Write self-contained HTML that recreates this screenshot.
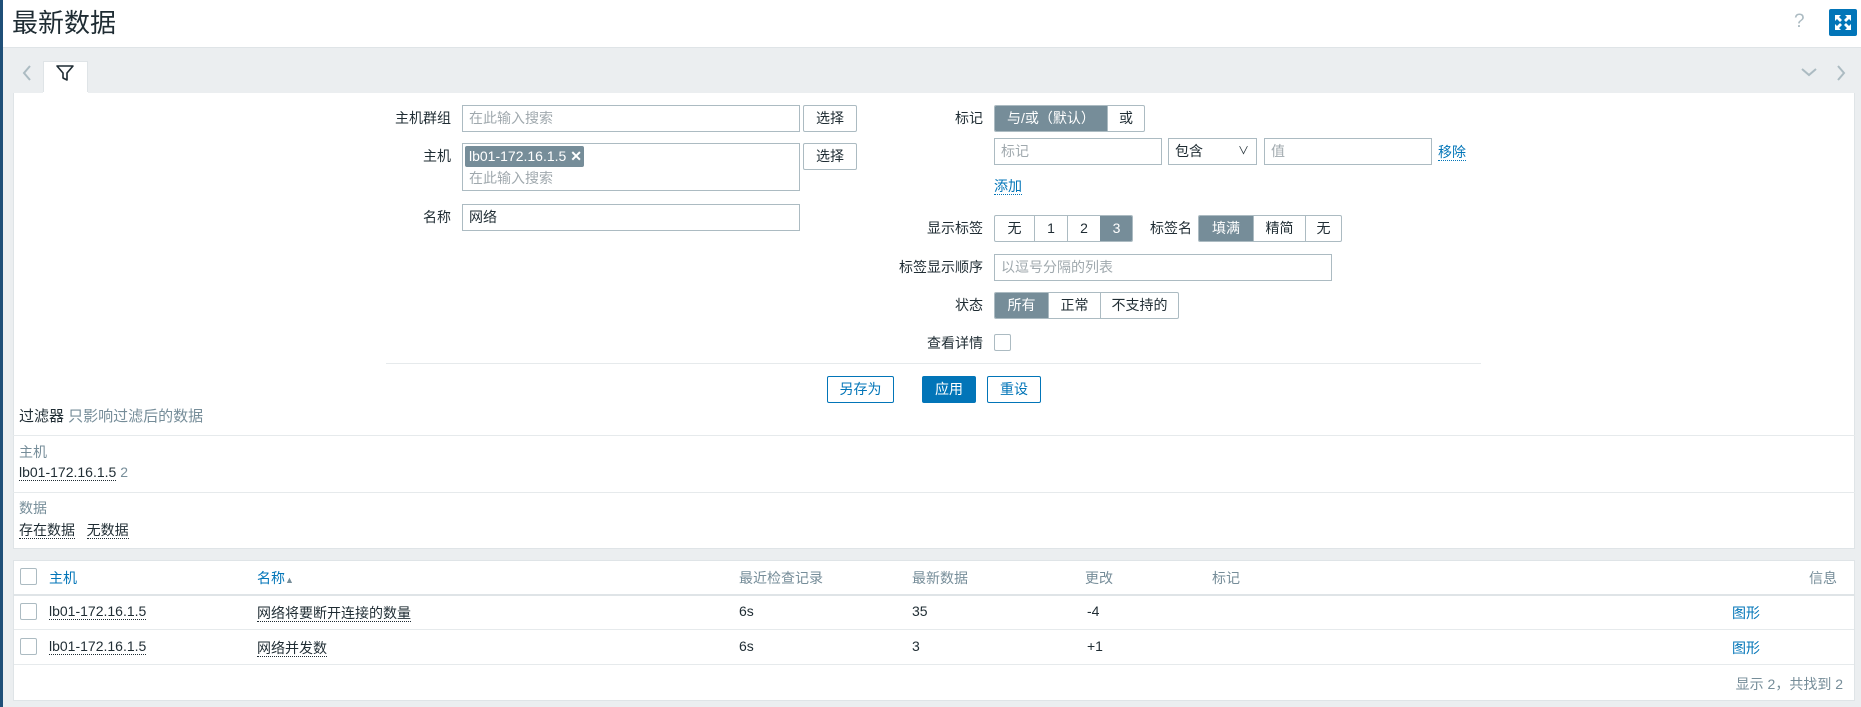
<!DOCTYPE html>
<html><head><meta charset="utf-8">
<style>
*{box-sizing:border-box;margin:0;padding:0}
body{width:1861px;height:707px;overflow:hidden;background:#ebeef0;font-family:"Liberation Sans","Noto Sans CJK SC",sans-serif;font-size:14px;color:#1f2c33;position:relative}
.a{position:absolute}
.lbl{position:absolute;text-align:right;line-height:27px}
.inp{position:absolute;border:1px solid #acbbc2;background:#fff;height:27px;line-height:25px;padding-left:6px}
.ph{color:#a0a9ae}
.btn{position:absolute;border:1px solid #acbbc2;background:#fff;height:27px;line-height:25px;text-align:center;border-radius:2px}
.seg{position:absolute;display:flex;height:27px;border:1px solid #acbbc2;border-radius:2px;overflow:hidden;background:#fff}
.seg div{line-height:25px;text-align:center;border-left:1px solid #acbbc2}
.seg div:first-child{border-left:none}
.seg .on{background:#768d99;color:#fff;border-color:#768d99}
.lnk{color:#0275b8;border-bottom:1px dotted #0275b8}
.dot{border-bottom:1px dotted #1f2c33}
.cb{position:absolute;width:17px;height:17px;border:1px solid #acbbc2;border-radius:2px;background:#fff}
.hline{position:absolute;height:1px;background:#e6eaec}
</style></head><body>
<div class="a" style="left:0;top:0;width:1861px;height:48px;background:#fff;border-bottom:1px solid #dfe4e7"></div>
<div class="a" style="left:0;top:0;width:3px;height:707px;background:#1f4f78"></div>
<div class="a" style="left:12px;top:8px;font-size:26px;line-height:30px">最新数据</div>
<div class="a" style="left:1794px;top:11px;font-size:19px;color:#acbbc2">?</div>
<div class="a" style="left:1829px;top:9px;width:28px;height:27px;background:#0275b8;border-radius:2px">
<svg width="28" height="27" viewBox="0 0 28 27"><g fill="#fff"><path d="M6 6h6l-2 2 3 3-2 2-3-3-2 2z"/><path d="M22 6h-6l2 2-3 3 2 2 3-3 2 2z"/><path d="M6 21h6l-2-2 3-3-2-2-3 3-2-2z"/><path d="M22 21h-6l2-2-3-3 2-2 3 3 2-2z"/></g></svg></div>
<!-- tab row -->
<svg class="a" style="left:20px;top:64px" width="14" height="18"><path d="M10 2 4 9l6 7" fill="none" stroke="#acbbc2" stroke-width="2"/></svg>
<div class="a" style="left:43px;top:61px;width:45px;height:33px;background:#fff;border:1px solid #dfe4e7;border-bottom:none"></div>
<svg class="a" style="left:55px;top:64px" width="20" height="18"><path d="M2 2h16l-6 7v7l-4-2V9z" fill="none" stroke="#1f2c33" stroke-width="1.6" stroke-linejoin="round"/></svg>
<svg class="a" style="left:1800px;top:64px" width="18" height="16"><path d="M2 5l7 6 7-6" fill="none" stroke="#acbbc2" stroke-width="2"/></svg>
<svg class="a" style="left:1834px;top:64px" width="14" height="18"><path d="M4 2l6 7-6 7" fill="none" stroke="#acbbc2" stroke-width="2"/></svg>
<!-- filter panel -->
<div class="a" style="left:13px;top:93px;width:1842px;height:456px;background:#fff;border:1px solid #dfe4e7;border-top:none"></div>
<div class="a" style="left:43px;top:92px;width:45px;height:2px;background:#fff"></div>

<div class="lbl" style="left:350px;width:101px;top:105px">主机群组</div>
<div class="inp ph" style="left:462px;top:105px;width:338px">在此输入搜索</div>
<div class="btn" style="left:803px;top:105px;width:54px">选择</div>
<div class="lbl" style="left:350px;width:101px;top:143px">主机</div>
<div class="inp" style="left:462px;top:143px;width:338px;height:48px"></div>
<div class="a" style="left:465px;top:146px;width:119px;height:21px;background:#768d99;color:#fff;border-radius:2px;line-height:21px;padding-left:4px">lb01-172.16.1.5 <b style="font-weight:bold">✕</b></div>
<div class="a ph" style="left:469px;top:167px;line-height:22px">在此输入搜索</div>
<div class="btn" style="left:803px;top:143px;width:54px">选择</div>
<div class="lbl" style="left:350px;width:101px;top:204px">名称</div>
<div class="inp" style="left:462px;top:204px;width:338px">网络</div>

<div class="lbl" style="left:850px;width:133px;top:105px">标记</div>
<div class="seg" style="left:994px;top:105px;width:151px"><div class="on" style="width:112px">与/或（默认）</div><div style="flex:1">或</div></div>
<div class="inp ph" style="left:994px;top:138px;width:168px">标记</div>
<div class="inp" style="left:1168px;top:138px;width:89px">包含<span class="a" style="right:7px;top:0;font-size:11px">&#8744;</span></div>
<div class="inp ph" style="left:1264px;top:138px;width:168px">值</div>
<div class="a" style="left:1438px;top:142px"><span class="lnk">移除</span></div>
<div class="a" style="left:994px;top:176px"><span class="lnk">添加</span></div>
<div class="lbl" style="left:850px;width:133px;top:215px">显示标签</div>
<div class="seg" style="left:994px;top:215px;width:139px"><div style="width:39px">无</div><div style="width:33px">1</div><div style="width:33px">2</div><div class="on" style="flex:1">3</div></div>
<div class="lbl" style="left:1140px;width:52px;top:215px">标签名</div>
<div class="seg" style="left:1198px;top:215px;width:144px"><div class="on" style="width:54px">填满</div><div style="width:52px">精简</div><div style="flex:1">无</div></div>
<div class="lbl" style="left:850px;width:133px;top:254px">标签显示顺序</div>
<div class="inp ph" style="left:994px;top:254px;width:338px">以逗号分隔的列表</div>
<div class="lbl" style="left:850px;width:133px;top:292px">状态</div>
<div class="seg" style="left:994px;top:292px;width:185px"><div class="on" style="width:53px">所有</div><div style="width:52px">正常</div><div style="flex:1">不支持的</div></div>
<div class="lbl" style="left:850px;width:133px;top:330px">查看详情</div>
<div class="cb" style="left:994px;top:334px"></div>
<div class="hline" style="left:386px;top:363px;width:1095px"></div>
<div class="btn" style="left:827px;top:376px;width:67px;border-color:#0275b8;color:#0275b8">另存为</div>
<div class="btn" style="left:922px;top:376px;width:54px;background:#0275b8;border-color:#0275b8;color:#fff">应用</div>
<div class="btn" style="left:987px;top:376px;width:54px;border-color:#0275b8;color:#0275b8">重设</div>

<div class="a" style="left:19px;top:407px;font-size:15px;line-height:20px">过滤器 <span style="color:#768d99">只影响过滤后的数据</span></div>
<div class="hline" style="left:13px;top:435px;width:1842px"></div>
<div class="a" style="left:19px;top:443px;color:#768d99;line-height:18px">主机</div>
<div class="a" style="left:19px;top:463px;line-height:18px"><span class="dot">lb01-172.16.1.5</span> <span style="color:#768d99">2</span></div>
<div class="hline" style="left:13px;top:492px;width:1842px"></div>
<div class="a" style="left:19px;top:499px;color:#768d99;line-height:18px">数据</div>
<div class="a" style="left:19px;top:521px;line-height:18px"><span class="dot">存在数据</span>&nbsp;&nbsp; <span class="dot">无数据</span></div>

<!-- table -->
<div class="a" style="left:13px;top:560px;width:1842px;height:141px;background:#fff;border:1px solid #dfe4e7"></div>
<div class="cb" style="left:20px;top:568px"></div>
<div class="a" style="left:49px;top:568px;color:#0275b8">主机</div>
<div class="a" style="left:257px;top:568px;color:#0275b8">名称<span style="color:#768d99;font-size:9px">▲</span></div>
<div class="a" style="left:739px;top:568px;color:#768d99">最近检查记录</div>
<div class="a" style="left:912px;top:568px;color:#768d99">最新数据</div>
<div class="a" style="left:1085px;top:568px;color:#768d99">更改</div>
<div class="a" style="left:1212px;top:568px;color:#768d99">标记</div>
<div class="a" style="left:1809px;top:568px;color:#768d99">信息</div>
<div class="a" style="left:14px;top:594px;width:1840px;height:2px;background:#dfe4e7"></div>

<div class="cb" style="left:20px;top:603px"></div>
<div class="a" style="left:49px;top:603px"><span class="dot">lb01-172.16.1.5</span></div>
<div class="a" style="left:257px;top:603px"><span class="dot">网络将要断开连接的数量</span></div>
<div class="a" style="left:739px;top:603px">6s</div>
<div class="a" style="left:912px;top:603px">35</div>
<div class="a" style="left:1087px;top:603px">-4</div>
<div class="a" style="left:1732px;top:603px;color:#0275b8">图形</div>
<div class="hline" style="left:14px;top:629px;width:1840px"></div>

<div class="cb" style="left:20px;top:638px"></div>
<div class="a" style="left:49px;top:638px"><span class="dot">lb01-172.16.1.5</span></div>
<div class="a" style="left:257px;top:638px"><span class="dot">网络并发数</span></div>
<div class="a" style="left:739px;top:638px">6s</div>
<div class="a" style="left:912px;top:638px">3</div>
<div class="a" style="left:1087px;top:638px">+1</div>
<div class="a" style="left:1732px;top:638px;color:#0275b8">图形</div>
<div class="hline" style="left:14px;top:664px;width:1840px"></div>
<div class="a" style="left:1640px;width:203px;text-align:right;top:674px;color:#768d99">显示 2，共找到 2</div>
</body></html>
